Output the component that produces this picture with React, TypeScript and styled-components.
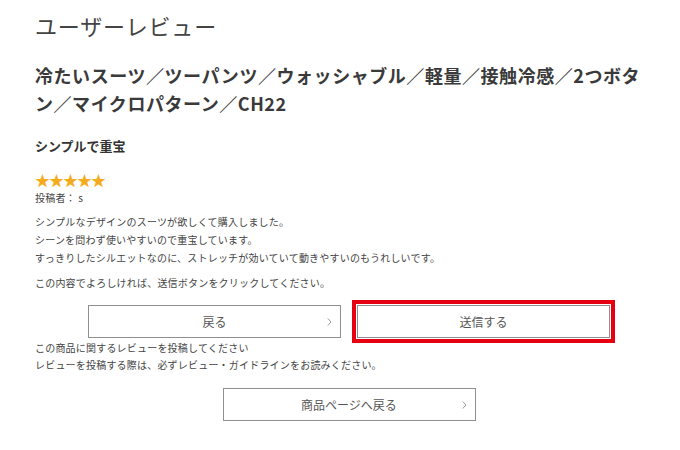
import React from "react";
import styled, { createGlobalStyle } from "styled-components";

const GlobalStyle = createGlobalStyle`
  html, body { margin: 0; padding: 0; background: #ffffff; }
  body {
    font-family: "Noto Sans CJK JP", "Noto Sans", sans-serif;
    color: #333333;
  }
`;

const Page = styled.main`
  width: 628px;
  padding: 10px 0 0 35px;
`;

const Title = styled.h1`
  margin: 0;
  font-size: 22px;
  line-height: 30px;
  font-weight: 400;
  color: #444444;
  letter-spacing: 0.8px;
`;

const ProductName = styled.h2`
  margin: 21px 0 0;
  max-width: 614px;
  font-size: 18px;
  line-height: 28px;
  font-weight: 700;
  color: #3a3a3a;
  letter-spacing: 0.55px;
`;

const ReviewTitle = styled.h3`
  margin: 19px 0 0;
  font-size: 13px;
  line-height: 20px;
  font-weight: 700;
  color: #333333;
`;

const Stars = styled.div`
  margin-top: 15px;
  font-size: 15px;
  line-height: 18px;
  color: #f5ac1c;
  letter-spacing: -1px;
`;

const SmallText = styled.p<{ $mt?: number; $lh?: number }>`
  margin: ${(p) => p.$mt ?? 0}px 0 0;
  font-size: 10px;
  line-height: ${(p) => p.$lh ?? 18}px;
  color: #444444;
  letter-spacing: 0.2px;
`;

const ButtonRow = styled.div<{ $mt: number }>`
  margin-top: ${(p) => p.$mt}px;
  display: flex;
  justify-content: center;
  gap: 16px;
`;

const Button = styled.button<{ $highlight?: boolean }>`
  position: relative;
  box-sizing: border-box;
  width: 253px;
  height: 33px;
  padding: 0;
  border: 1px solid #8f8f8f;
  background: #ffffff;
  font-family: "Noto Sans CJK JP", "Noto Sans", sans-serif;
  font-size: 12px;
  color: #555555;
  cursor: pointer;
  outline: ${(p) => (p.$highlight ? "4px solid #e50012" : "none")};
  outline-offset: 1px;
`;

const Chevron = styled.svg`
  position: absolute;
  right: 8px;
  top: 50%;
  transform: translateY(-50%);
`;

const ChevronIcon = () => (
  <Chevron width="5" height="9" viewBox="0 0 5 9" aria-hidden="true">
    <polyline
      points="0.8,1 4,4.5 0.8,8"
      fill="none"
      stroke="#9a9a9a"
      strokeWidth="1"
    />
  </Chevron>
);

export default function App() {
  return (
    <>
      <GlobalStyle />
      <Page>
        <Title>ユーザーレビュー</Title>
        <ProductName>
          冷たいスーツ／ツーパンツ／ウォッシャブル／軽量／接触冷感／2つボタン／マイクロパターン／CH22
        </ProductName>
        <ReviewTitle>シンプルで重宝</ReviewTitle>
        <Stars>★★★★★</Stars>
        <SmallText>投稿者： s</SmallText>
        <SmallText $mt={6}>
          シンプルなデザインのスーツが欲しくて購入しました。
          <br />
          シーンを問わず使いやすいので重宝しています。
          <br />
          すっきりしたシルエットなのに、ストレッチが効いていて動きやすいのもうれしいです。
        </SmallText>
        <SmallText $mt={7}>
          この内容でよろしければ、送信ボタンをクリックしてください。
        </SmallText>
        <ButtonRow $mt={13}>
          <Button type="button">
            戻る
            <ChevronIcon />
          </Button>
          <Button type="button" $highlight>
            送信する
          </Button>
        </ButtonRow>
        <SmallText $mt={1} $lh={17}>
          この商品に関するレビューを投稿してください
          <br />
          レビューを投稿する際は、必ずレビュー・ガイドラインをお読みください。
        </SmallText>
        <ButtonRow $mt={15}>
          <Button type="button">
            商品ページへ戻る
            <ChevronIcon />
          </Button>
        </ButtonRow>
      </Page>
    </>
  );
}
